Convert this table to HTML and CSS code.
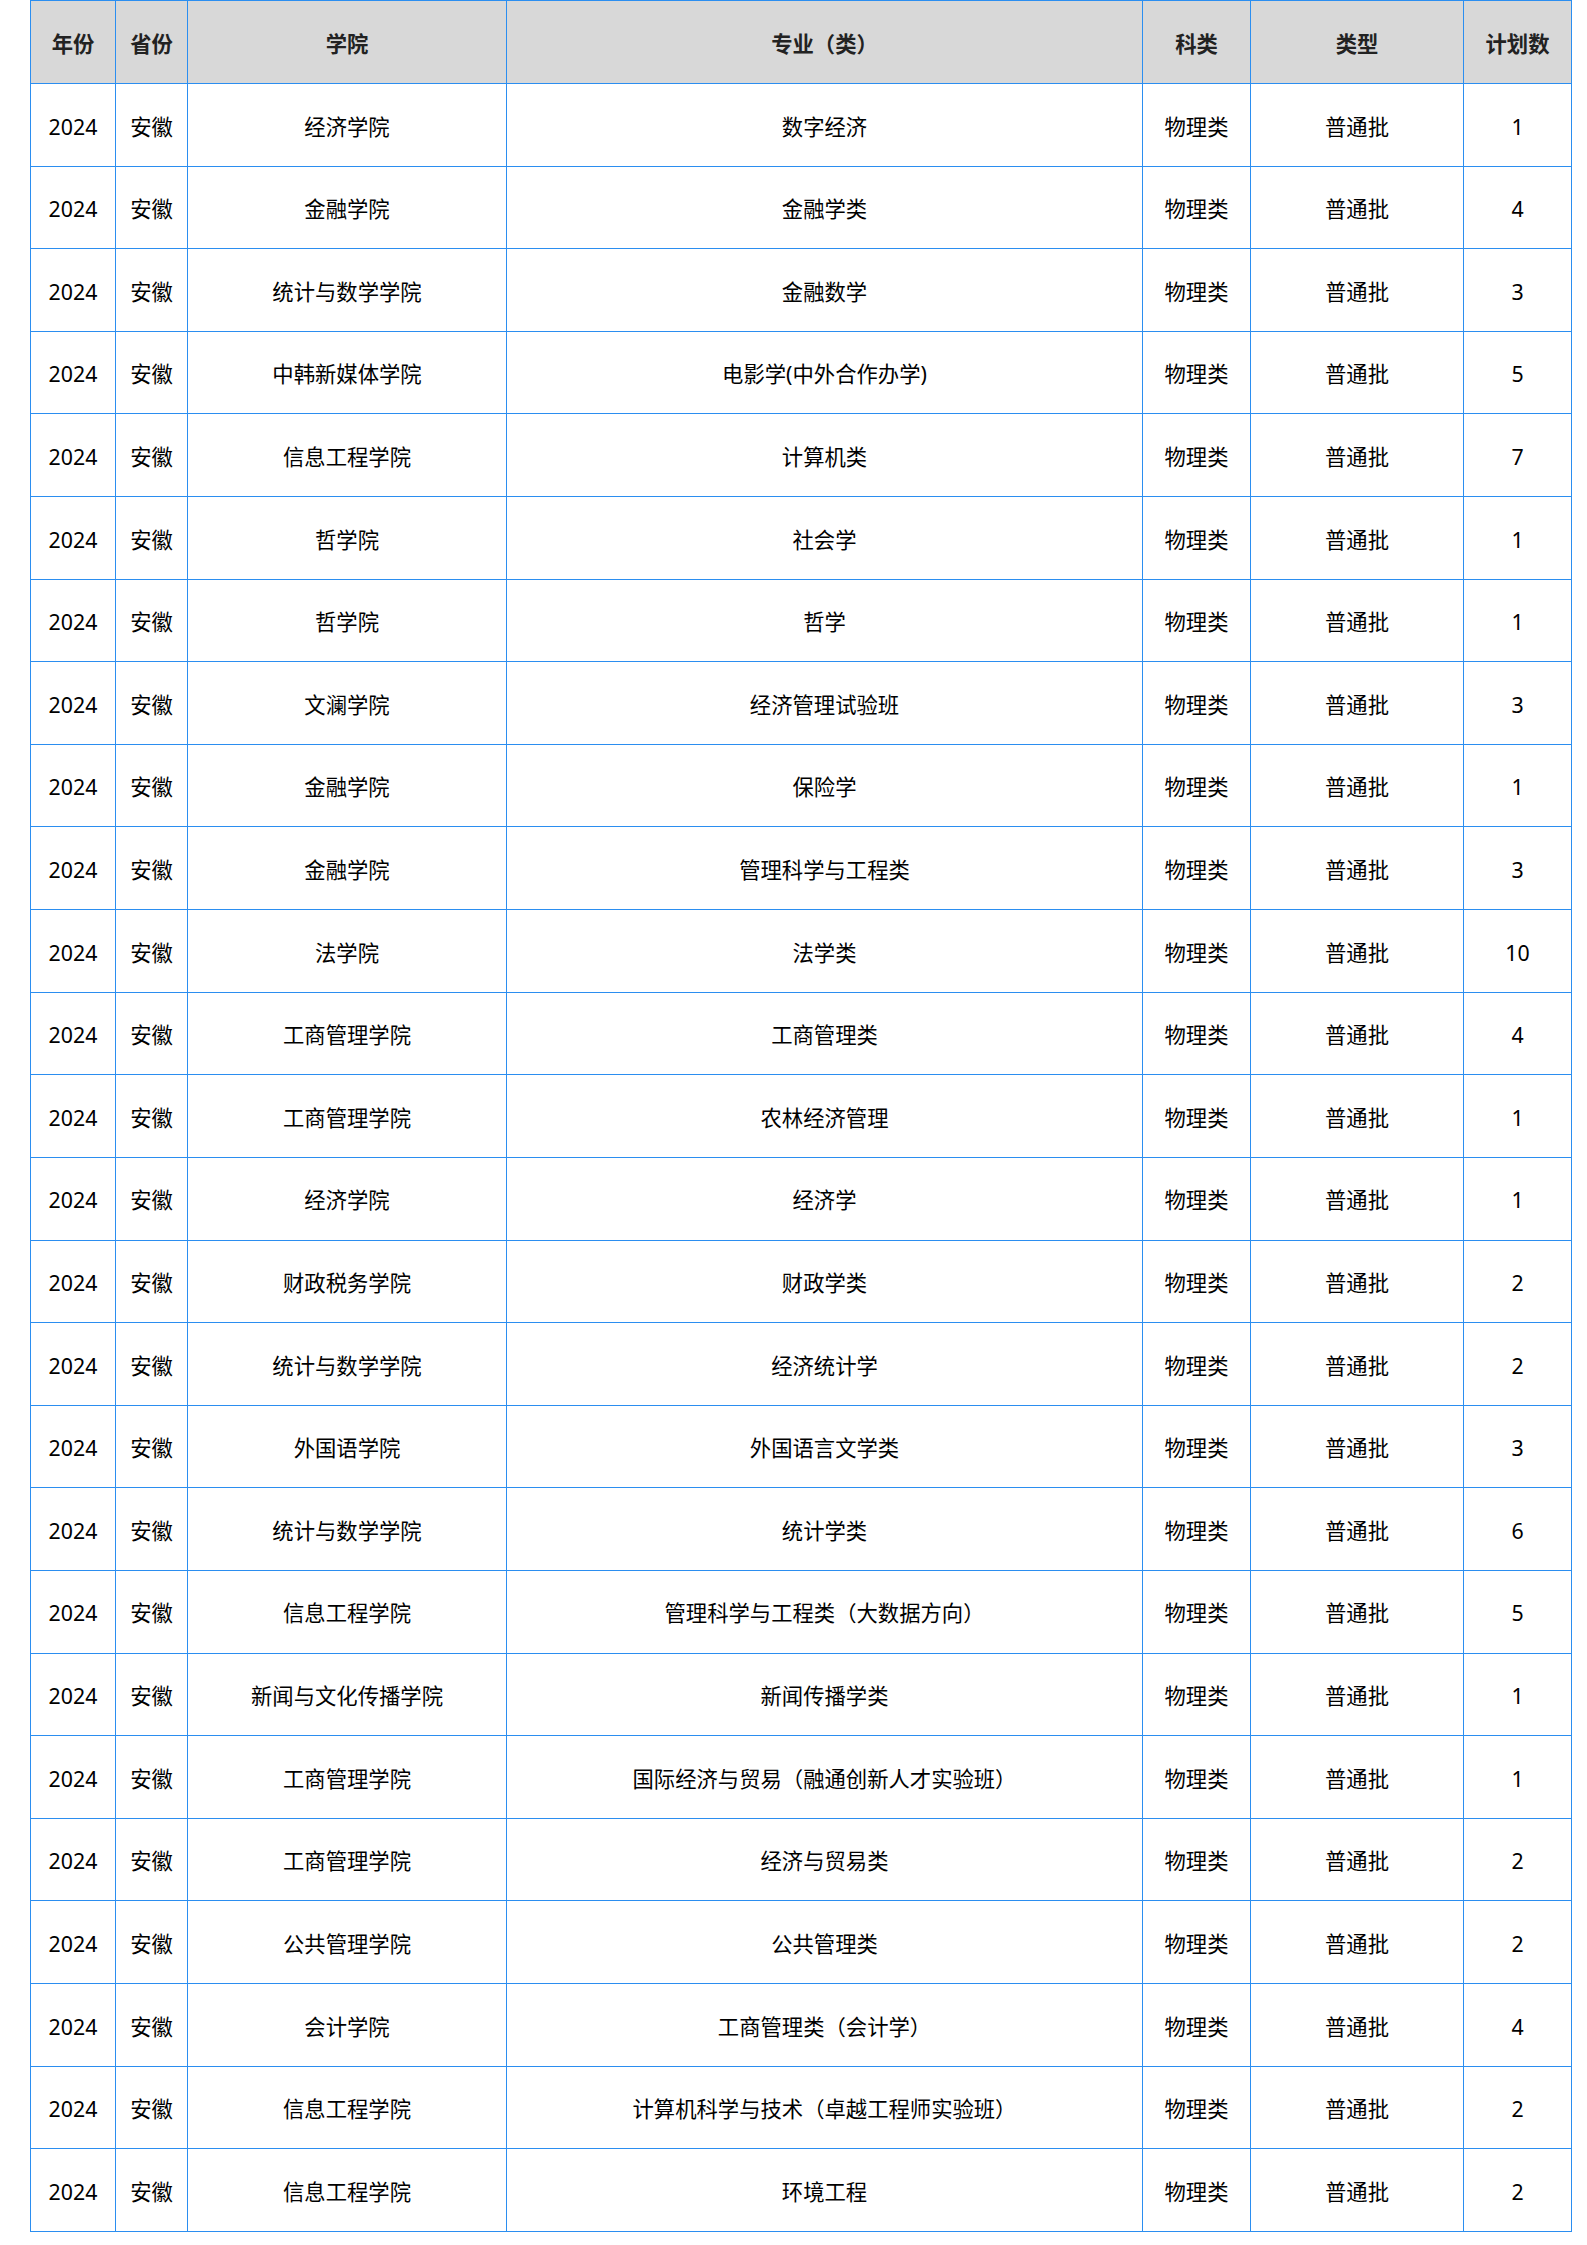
FILE: index.html
```html
<!DOCTYPE html>
<html lang="zh-CN">
<head>
<meta charset="utf-8">
<title>招生计划</title>
<link rel="stylesheet" href="styles.css">
</head>
<body>
<table class="plan">
<colgroup>
<col class="c-year"><col class="c-prov"><col class="c-col"><col class="c-major"><col class="c-sub"><col class="c-type"><col class="c-num">
</colgroup>
<thead>
<tr class="head"><th>年份</th><th>省份</th><th>学院</th><th>专业（类）</th><th>科类</th><th>类型</th><th>计划数</th></tr>
</thead>
<tbody>
<tr><td>2024</td><td>安徽</td><td>经济学院</td><td>数字经济</td><td>物理类</td><td>普通批</td><td>1</td></tr>
<tr><td>2024</td><td>安徽</td><td>金融学院</td><td>金融学类</td><td>物理类</td><td>普通批</td><td>4</td></tr>
<tr><td>2024</td><td>安徽</td><td>统计与数学学院</td><td>金融数学</td><td>物理类</td><td>普通批</td><td>3</td></tr>
<tr><td>2024</td><td>安徽</td><td>中韩新媒体学院</td><td>电影学(中外合作办学)</td><td>物理类</td><td>普通批</td><td>5</td></tr>
<tr><td>2024</td><td>安徽</td><td>信息工程学院</td><td>计算机类</td><td>物理类</td><td>普通批</td><td>7</td></tr>
<tr><td>2024</td><td>安徽</td><td>哲学院</td><td>社会学</td><td>物理类</td><td>普通批</td><td>1</td></tr>
<tr><td>2024</td><td>安徽</td><td>哲学院</td><td>哲学</td><td>物理类</td><td>普通批</td><td>1</td></tr>
<tr><td>2024</td><td>安徽</td><td>文澜学院</td><td>经济管理试验班</td><td>物理类</td><td>普通批</td><td>3</td></tr>
<tr><td>2024</td><td>安徽</td><td>金融学院</td><td>保险学</td><td>物理类</td><td>普通批</td><td>1</td></tr>
<tr><td>2024</td><td>安徽</td><td>金融学院</td><td>管理科学与工程类</td><td>物理类</td><td>普通批</td><td>3</td></tr>
<tr><td>2024</td><td>安徽</td><td>法学院</td><td>法学类</td><td>物理类</td><td>普通批</td><td>10</td></tr>
<tr><td>2024</td><td>安徽</td><td>工商管理学院</td><td>工商管理类</td><td>物理类</td><td>普通批</td><td>4</td></tr>
<tr><td>2024</td><td>安徽</td><td>工商管理学院</td><td>农林经济管理</td><td>物理类</td><td>普通批</td><td>1</td></tr>
<tr><td>2024</td><td>安徽</td><td>经济学院</td><td>经济学</td><td>物理类</td><td>普通批</td><td>1</td></tr>
<tr><td>2024</td><td>安徽</td><td>财政税务学院</td><td>财政学类</td><td>物理类</td><td>普通批</td><td>2</td></tr>
<tr><td>2024</td><td>安徽</td><td>统计与数学学院</td><td>经济统计学</td><td>物理类</td><td>普通批</td><td>2</td></tr>
<tr><td>2024</td><td>安徽</td><td>外国语学院</td><td>外国语言文学类</td><td>物理类</td><td>普通批</td><td>3</td></tr>
<tr><td>2024</td><td>安徽</td><td>统计与数学学院</td><td>统计学类</td><td>物理类</td><td>普通批</td><td>6</td></tr>
<tr><td>2024</td><td>安徽</td><td>信息工程学院</td><td>管理科学与工程类（大数据方向）</td><td>物理类</td><td>普通批</td><td>5</td></tr>
<tr><td>2024</td><td>安徽</td><td>新闻与文化传播学院</td><td>新闻传播学类</td><td>物理类</td><td>普通批</td><td>1</td></tr>
<tr><td>2024</td><td>安徽</td><td>工商管理学院</td><td>国际经济与贸易（融通创新人才实验班）</td><td>物理类</td><td>普通批</td><td>1</td></tr>
<tr><td>2024</td><td>安徽</td><td>工商管理学院</td><td>经济与贸易类</td><td>物理类</td><td>普通批</td><td>2</td></tr>
<tr><td>2024</td><td>安徽</td><td>公共管理学院</td><td>公共管理类</td><td>物理类</td><td>普通批</td><td>2</td></tr>
<tr><td>2024</td><td>安徽</td><td>会计学院</td><td>工商管理类（会计学）</td><td>物理类</td><td>普通批</td><td>4</td></tr>
<tr><td>2024</td><td>安徽</td><td>信息工程学院</td><td>计算机科学与技术（卓越工程师实验班）</td><td>物理类</td><td>普通批</td><td>2</td></tr>
<tr><td>2024</td><td>安徽</td><td>信息工程学院</td><td>环境工程</td><td>物理类</td><td>普通批</td><td>2</td></tr>
</tbody>
</table>
</body>
</html>
```
FILE: styles.css
```css
html, body {
  margin: 0;
  padding: 0;
  background: #ffffff;
}

body {
  font-family: "Noto Sans", "Noto Sans CJK SC", sans-serif;
  color: #000000;
}

.plan {
  margin-left: 30px;
  width: 1542px;
  border-collapse: collapse;
  table-layout: fixed;
  font-size: 16pt;
}

.c-year { width: 85px; }
.c-prov { width: 72px; }
.c-col { width: 319px; }
.c-major { width: 636px; }
.c-sub { width: 108px; }
.c-type { width: 213px; }
.c-num { width: 108px; }

.plan th,
.plan td {
  border: 1px solid #2b8ef0;
  text-align: center;
  vertical-align: middle;
  padding: 3px 0 0 0;
  white-space: nowrap;
  line-height: 1.2;
}

.plan th {
  background: #d8d8d8;
  color: #222222;
  font-weight: 700;
}

.plan .head {
  height: 83px;
}

.plan tbody tr {
  height: 82.615px;
}
```
